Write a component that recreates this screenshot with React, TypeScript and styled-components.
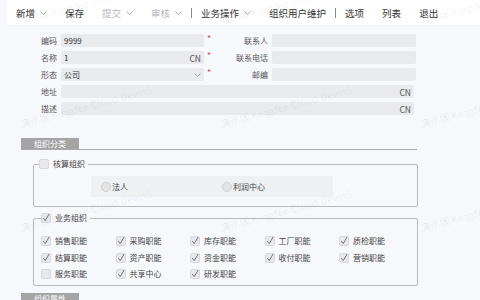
import React from 'react';
import styled, { createGlobalStyle } from 'styled-components';

const GlobalStyle = createGlobalStyle`
  html, body { margin: 0; padding: 0; }
  body {
    background: #f7f8fb;
    font-family: "Noto Sans CJK SC", "Noto Sans", sans-serif;
    color: #333;
  }
`;

const Page = styled.div`
  position: relative;
  width: 480px;
  height: 300px;
  overflow: hidden;
`;

const Toolbar = styled.div`
  margin-left: 7px;
  height: 25px;
  background: #fff;
  display: flex;
  align-items: center;
  box-shadow: 0 1px 2px rgba(0, 0, 0, 0.04);
`;

const ToolItem = styled.div<{ $disabled?: boolean }>`
  display: flex;
  align-items: center;
  gap: 5px;
  padding: 0 9px;
  font-size: 9.5px;
  line-height: 12px;
  color: ${(p) => (p.$disabled ? '#b8b8b8' : '#333')};
  white-space: nowrap;
`;

const ToolSep = styled.div`
  width: 1px;
  height: 10px;
  background: #888;
`;

const Form = styled.div`
  display: grid;
  grid-template-columns: 61px 143px 12px 56px 144px;
  grid-auto-rows: 13px;
  row-gap: 4px;
  padding-top: 9px;
`;

const Label = styled.div`
  font-size: 8px;
  line-height: 13px;
  color: #555;
  text-align: right;
  padding-right: 4px;
  white-space: nowrap;
`;

const Input = styled.div<{ $wide?: boolean }>`
  background: #e8eaed;
  border-radius: 2px;
  font-size: 8px;
  color: #333;
  display: flex;
  align-items: center;
  justify-content: space-between;
  padding: 0 3px;
  ${(p) => (p.$wide ? 'grid-column: 2 / 6; margin-right: 2px;' : '')}
`;

const Suffix = styled.span`
  font-size: 8.5px;
  color: #555;
`;

const Star = styled.div`
  color: #e5473f;
  font-size: 9px;
  line-height: 10px;
  padding-left: 3px;
`;

const SectionHead = styled.div<{ $top: number }>`
  margin: ${(p) => p.$top}px 0 0 21px;
  width: 396px;
  border-bottom: 1px solid #a9a9a9;
  display: flex;
`;

const SectionTab = styled.div`
  background: #a4a4a4;
  color: #fff;
  font-size: 8px;
  width: 58px;
  height: 11px;
  line-height: 11px;
  text-align: center;
`;

const Group = styled.fieldset<{ $top: number }>`
  margin: ${(p) => p.$top}px 0 0 33px;
  width: 385px;
  box-sizing: border-box;
  border: 1px solid #b9b9bd;
  border-radius: 2px;
  padding: 0;
`;

const Legend = styled.legend<{ $offset: number }>`
  margin-left: ${(p) => p.$offset}px;
  padding: 0 3px 0 0;
  display: flex;
  align-items: center;
  gap: 4px;
  font-size: 8px;
  line-height: 10px;
  color: #444;
`;

const Box = styled.span`
  width: 10px;
  height: 10px;
  box-sizing: border-box;
  border: 1px solid #d8d9de;
  border-radius: 2px;
  background: #e7e8ec;
  display: inline-flex;
  align-items: center;
  justify-content: center;
  flex: none;
`;

const RadioArea = styled.div`
  margin: 7px 0 9px 57px;
  width: 242px;
  height: 21px;
  background: #eff0f2;
  display: flex;
  align-items: center;
  padding-left: 10px;
  box-sizing: border-box;
`;

const RadioItem = styled.div<{ $w?: number }>`
  display: flex;
  align-items: center;
  gap: 1px;
  font-size: 8px;
  color: #444;
  ${(p) => (p.$w ? `width: ${p.$w}px;` : '')}
`;

const RadioDot = styled.span`
  width: 10px;
  height: 10px;
  box-sizing: border-box;
  border-radius: 50%;
  border: 1px solid #cfcfd3;
  background: #e2e3e6;
`;

const CheckGrid = styled.div`
  display: grid;
  grid-template-columns: repeat(5, 74.5px);
  grid-auto-rows: 10px;
  row-gap: 6.5px;
  padding: 13px 0 6px 7px;
`;

const CheckItem = styled.div`
  display: flex;
  align-items: center;
  gap: 4px;
  font-size: 8px;
  line-height: 10px;
  color: #444;
  white-space: nowrap;
`;

const Watermark = styled.span`
  position: absolute;
  font-size: 10px;
  color: rgba(0, 0, 0, 0.07);
  white-space: nowrap;
  transform: rotate(-15deg);
  transform-origin: left bottom;
  pointer-events: none;
  line-height: 12px;
`;

const Chevron = () => (
  <svg width="7" height="4" viewBox="0 0 7 4">
    <polyline points="0.5,0.5 3.5,3.5 6.5,0.5" fill="none" stroke="#a0a0a0" strokeWidth="0.9" />
  </svg>
);

const Tick = () => (
  <svg width="10" height="10" viewBox="0 0 10 10" style={{ overflow: 'visible' }}>
    <polyline points="2.2,5 4.2,7.6 8.2,1" fill="none" stroke="#6a6a6a" strokeWidth="0.9" />
  </svg>
);

const Check = ({ checked }: { checked?: boolean }) => <Box>{checked ? <Tick /> : null}</Box>;

const funcs: [string, boolean][] = [
  ['销售职能', true],
  ['采购职能', true],
  ['库存职能', true],
  ['工厂职能', true],
  ['质检职能', true],
  ['结算职能', true],
  ['资产职能', true],
  ['资金职能', true],
  ['收付职能', true],
  ['营销职能', true],
  ['服务职能', false],
  ['共享中心', true],
  ['研发职能', true],
];

const marks: [number, number][] = [];
[15, 118, 222].forEach((y) => [22, 222, 422].forEach((x) => marks.push([x, y])));

export default function App() {
  return (
    <Page>
      <GlobalStyle />
      <Toolbar>
        <ToolItem>新增<Chevron /></ToolItem>
        <ToolItem>保存</ToolItem>
        <ToolItem $disabled>提交<Chevron /></ToolItem>
        <ToolItem $disabled>审核<Chevron /></ToolItem>
        <ToolSep />
        <ToolItem>业务操作<Chevron /></ToolItem>
        <ToolItem>组织用户维护</ToolItem>
        <ToolSep />
        <ToolItem>选项</ToolItem>
        <ToolItem>列表</ToolItem>
        <ToolItem>退出</ToolItem>
      </Toolbar>

      <Form>
        <Label>编码</Label>
        <Input>9999</Input>
        <Star>*</Star>
        <Label>联系人</Label>
        <Input />

        <Label>名称</Label>
        <Input>1<Suffix>CN</Suffix></Input>
        <Star>*</Star>
        <Label>联系电话</Label>
        <Input />

        <Label>形态</Label>
        <Input>公司<Chevron /></Input>
        <Star>*</Star>
        <Label>邮编</Label>
        <Input />

        <Label>地址</Label>
        <Input $wide><span /><Suffix>CN</Suffix></Input>

        <Label>描述</Label>
        <Input $wide><span /><Suffix>CN</Suffix></Input>
      </Form>

      <SectionHead $top={23}>
        <SectionTab>组织分类</SectionTab>
      </SectionHead>

      <Group $top={9}>
        <Legend $offset={5}>
          <Check />
          核算组织
        </Legend>
        <RadioArea>
          <RadioItem $w={121}><RadioDot />法人</RadioItem>
          <RadioItem><RadioDot />利润中心</RadioItem>
        </RadioArea>
      </Group>

      <Group $top={6}>
        <Legend $offset={7}>
          <Check checked />
          业务组织
        </Legend>
        <CheckGrid>
          {funcs.map(([name, on]) => (
            <CheckItem key={name}>
              <Check checked={on} />
              {name}
            </CheckItem>
          ))}
        </CheckGrid>
      </Group>

      <SectionHead $top={7}>
        <SectionTab>组织属性</SectionTab>
      </SectionHead>

      {marks.map(([x, y]) => (
        <Watermark key={`${x}-${y}`} style={{ left: x, top: y }}>
          演示版 Kingdee.Cloud.DevinS
        </Watermark>
      ))}
    </Page>
  );
}
